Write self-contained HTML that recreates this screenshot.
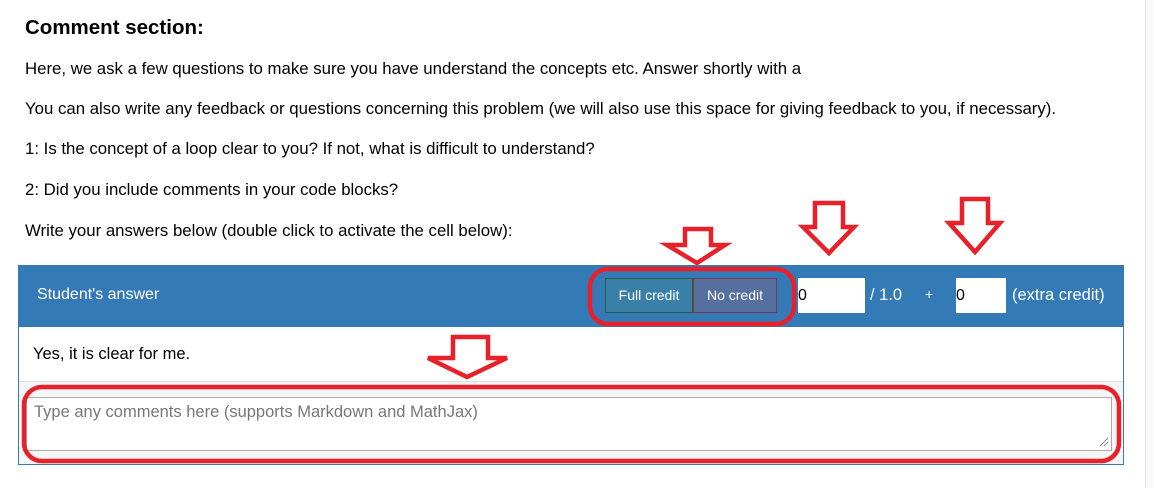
<!DOCTYPE html><html><head><style>
body{margin:0;width:1154px;height:488px;background:#fff;font-family:"Liberation Sans",sans-serif;color:#000;position:relative;overflow:hidden}
.a{position:absolute;white-space:nowrap}
p{position:absolute;left:25px;margin:0;font-size:16.8px}
</style></head><body>
<div class="a" style="left:1145px;top:0;width:9px;height:488px;border-left:1px solid #e0e0e0;background:#fafafa"></div>
<div class="a" style="left:25px;top:16px;font-size:20.5px;font-weight:bold">Comment section:</div>
<p style="top:59px">Here, we ask a few questions to make sure you have understand the concepts etc. Answer shortly with a</p>
<p style="top:99px">You can also write any feedback or questions concerning this problem (we will also use this space for giving feedback to you, if necessary).</p>
<p style="top:139px">1: Is the concept of a loop clear to you? If not, what is difficult to understand?</p>
<p style="top:180px">2: Did you include comments in your code blocks?</p>
<p style="top:221px">Write your answers below (double click to activate the cell below):</p>
<div class="a" style="left:18px;top:265px;width:1106px;height:62px;background:#337ab7"></div>
<div class="a" style="left:37px;top:286px;color:#fff;font-size:16px">Student's answer</div>
<div class="a" style="left:605px;top:278px;width:86px;height:33px;background:#3a7fa8;border:1px solid #2b5e3e;color:#fff;font-size:14px;line-height:33px;text-align:center">Full credit</div>
<div class="a" style="left:693px;top:278px;width:82px;height:33px;background:#55709f;border:1px solid #7a3a4a;color:#fff;font-size:14px;line-height:33px;text-align:center">No credit</div>
<div class="a" style="left:798px;top:278px;width:67px;height:35px;background:#fff;font-size:16px;line-height:35px">0</div>
<div class="a" style="left:870px;top:286px;color:#fff;font-size:16.5px">/ 1.0</div>
<div class="a" style="left:925px;top:286px;color:#fff;font-size:14px">+</div>
<div class="a" style="left:956px;top:278px;width:50px;height:35px;background:#fff;font-size:16px;line-height:35px">0</div>
<div class="a" style="left:1012px;top:286px;color:#fff;font-size:16.5px">(extra credit)</div>
<div class="a" style="left:33px;top:345px;font-size:16.5px">Yes, it is clear for me.</div>
<div class="a" style="left:19px;top:381px;width:1104px;height:83px;background:#f5f5f5;border-top:1px solid #ddd"></div>
<div class="a" style="left:18px;top:327px;width:1104px;height:137px;border:1px solid #337ab7;border-top:0"></div>
<div class="a" style="left:26px;top:397px;width:1084px;height:52px;background:#fff;border:1px solid #aaa;color:#777;font-size:16.5px"><div style="padding:5px 7px">Type any comments here (supports Markdown and MathJax)</div></div>
<svg class="a" style="left:0;top:0" width="1154" height="488">
<g fill="none" stroke="#e8202a" stroke-width="4.5">
<rect x="590" y="269" width="204" height="55" rx="18"/>
<rect x="24" y="387" width="1095" height="74" rx="18"/>
<path d="M685 229H711V245H725L697 263L667 245H685Z"/>
<path d="M815 203H843V227H854L829 253L803 227H815Z"/>
<path d="M962 199H988V223H1000L975 252L949 223H962Z"/>
<path d="M453 337H488V358H507L467 377L428 358H453Z"/>
</g>
<path d="M1100 446L1108 438M1104 446L1108 442" stroke="#888"/>
</svg>
</body></html>
